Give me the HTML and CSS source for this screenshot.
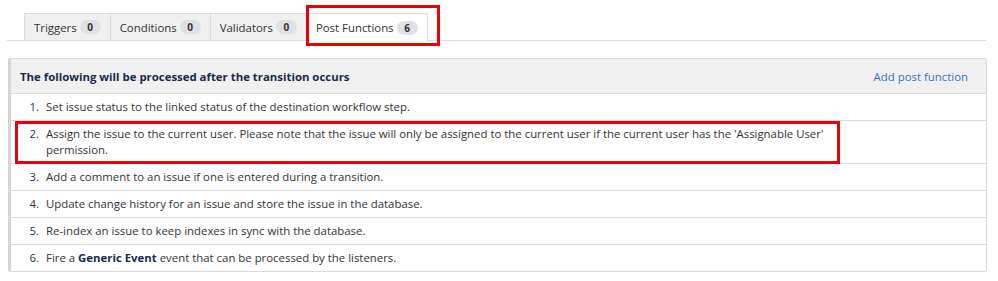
FILE: index.html
```html
<!DOCTYPE html>
<html>
<head>
<meta charset="utf-8">
<link rel="stylesheet" href="styles.css">
</head>
<body>
<div class="page">
  <div class="tabs">
    <div class="tab">Triggers <span class="badge">0</span></div>
    <div class="tab">Conditions <span class="badge">0</span></div>
    <div class="tab">Validators <span class="badge">0</span></div>
    <div class="tab active">Post Functions <span class="badge">6</span><span class="mark mark-tab"></span></div>
  </div>
  <div class="panel">
    <div class="panel-head">
      <span class="title">The following will be processed after the transition occurs</span>
      <a class="add" href="#">Add post function</a>
    </div>
    <ol class="list">
      <li class="row"><span class="num">1.</span><span class="txt">Set issue status to the linked status of the destination workflow step.</span></li>
      <li class="row"><span class="num">2.</span><span class="txt">Assign the issue to the current user. Please note that the issue will only be assigned to the current user if the current user has the 'Assignable User' permission.</span><span class="mark mark-row"></span></li>
      <li class="row"><span class="num">3.</span><span class="txt">Add a comment to an issue if one is entered during a transition.</span></li>
      <li class="row"><span class="num">4.</span><span class="txt">Update change history for an issue and store the issue in the database.</span></li>
      <li class="row"><span class="num">5.</span><span class="txt">Re-index an issue to keep indexes in sync with the database.</span></li>
      <li class="row"><span class="num">6.</span><span class="txt">Fire a <b>Generic Event</b> event that can be processed by the listeners.</span></li>
    </ol>
  </div>
</div>
</body>
</html>
```
FILE: styles.css
```css
* { box-sizing: border-box; }
html, body { margin: 0; padding: 0; background: #fff; }
body {
  font-family: "Open Sans", "Noto Sans", sans-serif;
  font-size: 11.4px;
  color: #333;
}
.page { padding: 13px 12px 0 7px; }
.tabs {
  display: flex;
  padding-left: 17px;
  border-bottom: 1px solid #ddd;
  height: 28px;
}
.tab {
  position: relative;
  display: flex;
  align-items: center;
  gap: 3px;
  height: 27px;
  padding: 0 9px 0 9px;
  background: #f0f0f0;
  border: 1px solid #dcdcdc;
  border-bottom: none;
  border-right: none;
  color: #333;
}
.tab:last-child { border-right: 1px solid #dcdcdc; }
.tab.active { background: #fff; height: 28px; }
.badge {
  display: inline-flex;
  align-items: center;
  justify-content: center;
  width: 21px;
  height: 14px;
  border-radius: 7px;
  background: #dfe1e6;
  font-size: 10px;
  font-weight: 700;
  color: #333;
}
.mark {
  position: absolute;
  border: 3px solid #e8000b;
  pointer-events: none;
}
.mark-tab { left: -1px; right: -13px; top: -9px; bottom: -5px; }
.panel {
  margin-top: 17px;
  margin-left: 1px;
  width: 979px;
  border: 1px solid #dcdcdc;
  border-left: 3px solid #d4d4d4;
  border-radius: 2px;
}
.panel-head {
  display: flex;
  justify-content: space-between;
  align-items: center;
  height: 35px;
  padding: 0 18px 0 9px;
  background: #f0f0f0;
  border-bottom: 1px solid #dcdcdc;
}
.title { font-weight: 700; color: #172b4d; }
.add { color: #3572c4; text-decoration: none; }
.list { list-style: none; margin: 0; padding: 0; }
.row {
  position: relative;
  display: flex;
  gap: 7px;
  padding: 5px 10px 5px 16px;
  line-height: 16px;
  border-bottom: 1px solid #dcdcdc;
}
.row:last-child { border-bottom: none; }
.num { flex: none; width: 12px; text-align: right; }
.txt { max-width: 790px; }
.txt b { color: #172b4d; }
.mark-row { left: 4px; top: 0; bottom: -1px; width: 825px; }
```
